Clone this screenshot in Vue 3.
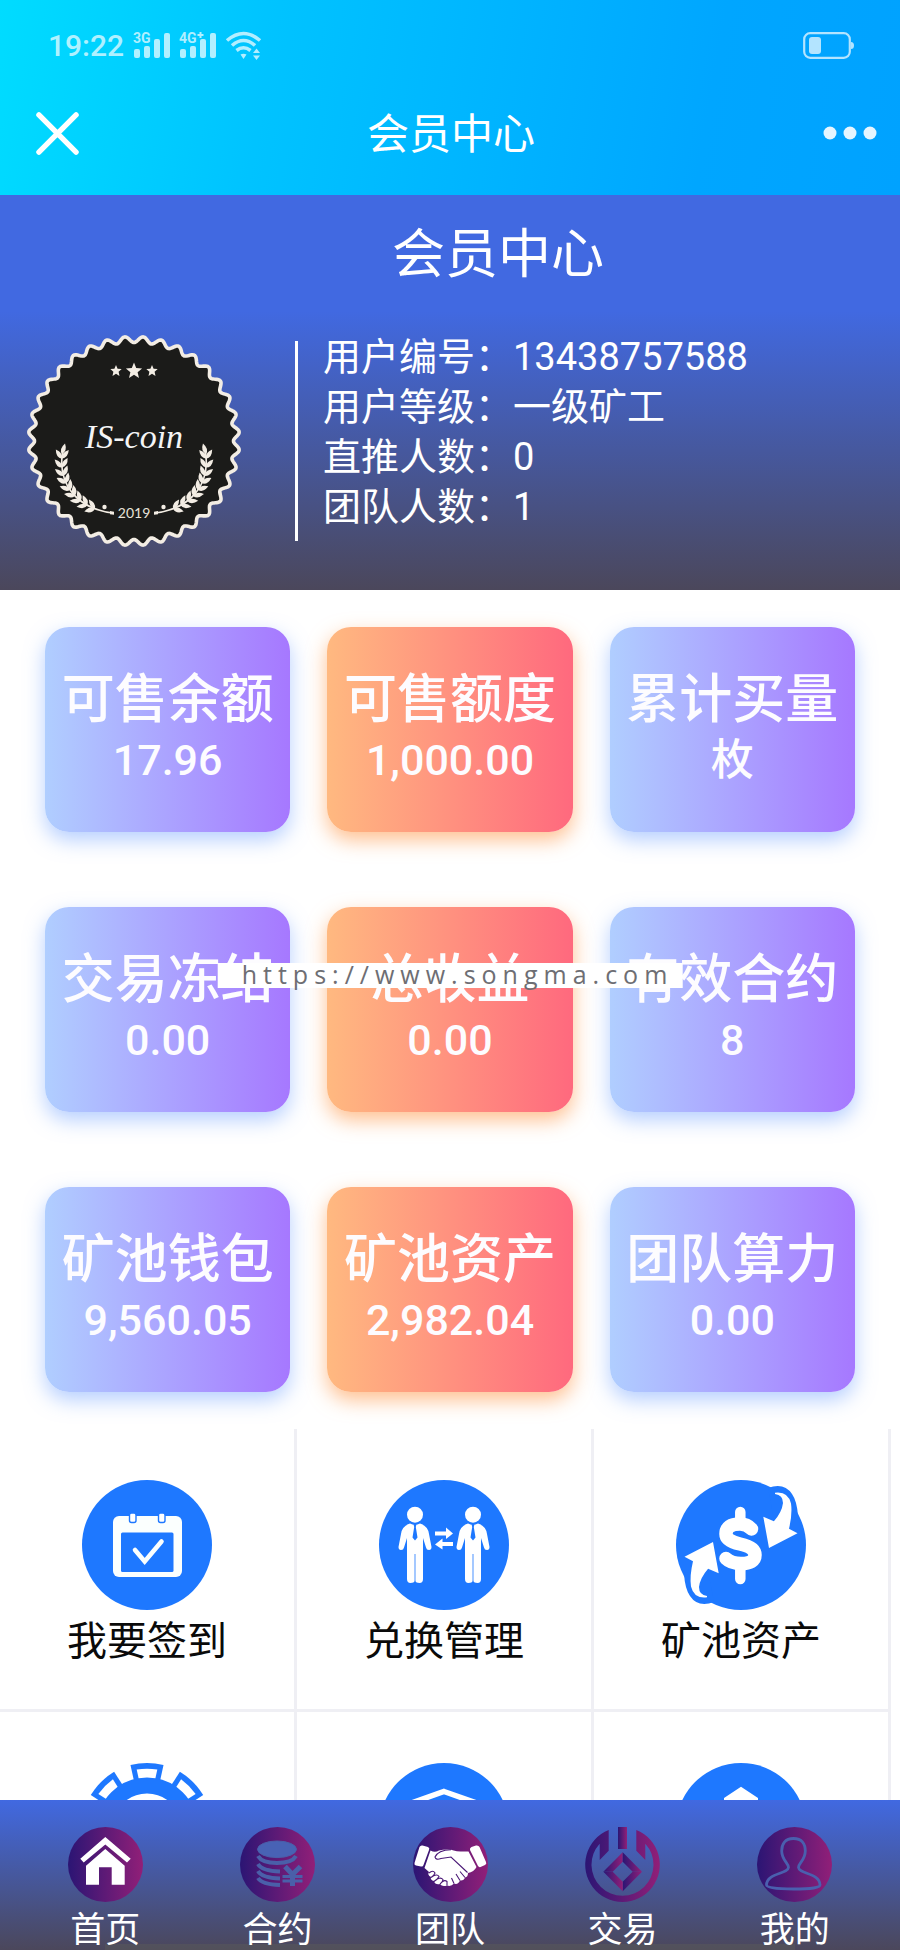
<template>
  <div class="app-shell">
    <svg class="defs" width="0" height="0" aria-hidden="true">
      <defs>
        <linearGradient id="tab-gradient" x1="0" y1="0" x2="1" y2="0">
          <stop offset="0" stop-color="#2b1574" />
          <stop offset="1" stop-color="#911f78" />
        </linearGradient>
      </defs>
    </svg>

    <header class="top-bar">
      <div class="status-row">
        <div class="status-left">
          <span class="clock">19:22</span>
          <svg class="signals" width="130" height="30" viewBox="0 0 130 30" aria-hidden="true">
            <g fill="currentColor">
              <text class="net" x="0" y="12">3G</text>
              <rect x="1" y="18" width="6" height="9" rx="2" />
              <rect x="11" y="15" width="6" height="12" rx="2" />
              <rect x="21" y="8" width="6" height="19" rx="2" />
              <rect x="31" y="2" width="6" height="25" rx="2" />
              <text class="net" x="46" y="12">4G</text>
              <path d="M66.500 1h2v2h2v2h-2v2h-2v-2h-2v-2h2z" />
              <rect x="47" y="18" width="6" height="9" rx="2" />
              <rect x="57" y="15" width="6" height="12" rx="2" />
              <rect x="67" y="8" width="6" height="19" rx="2" />
              <rect x="77" y="2" width="6" height="25" rx="2" />
              <path d="M107.500 23.500q3-1.500 6 0l-3 4.500z" />
              <path d="M120 22l3.500-4.500 3.500 4.500z" />
              <path d="M120 24.500l3.500 4.500 3.500-4.500z" />
            </g>
            <g fill="none" stroke="currentColor" stroke-width="3.600">
              <path d="M94 9.500q16.500-14 33 0" />
              <path d="M99 14.500q11.500-10 23 0" />
              <path d="M103.500 19.500q7-5.500 14 0" />
            </g>
          </svg>
        </div>
        <svg class="battery" width="52" height="28" viewBox="0 0 52 28" aria-hidden="true">
          <rect x="1.200" y="1.200" width="45.600" height="24.600" rx="6" fill="none" stroke="currentColor" stroke-width="2.200" />
          <rect x="6" y="5" width="12" height="17" rx="3" fill="currentColor" />
          <path d="M48 10q3 0 3 3.500t-3 3.500z" fill="currentColor" />
        </svg>
      </div>
      <div class="nav-row">
        <button type="button" class="icon-button" aria-label="关闭">
          <svg width="43" height="43" viewBox="0 0 44 44">
            <path d="M3 3L41 41M41 3L3 41" stroke="#fff" stroke-width="5.500" stroke-linecap="round" />
          </svg>
        </button>
        <div class="nav-title">会员中心</div>
        <button type="button" class="icon-button" aria-label="更多">
          <svg width="54" height="14" viewBox="0 0 54 14" fill="#e5f5ff">
            <circle cx="7" cy="7" r="6.500" />
            <circle cx="27" cy="7" r="6.500" />
            <circle cx="47" cy="7" r="6.500" />
          </svg>
        </button>
      </div>
    </header>

    <main class="content">
      <h1 class="page-title">会员中心</h1>

      <section class="profile">
        <svg class="badge" width="214" height="212" viewBox="-107 -106 214 212" role="img" aria-label="IS-coin 2019">
          <path :d="sealPath" fill="#1b1b19" stroke="#f3ede4" stroke-width="3.600" stroke-linejoin="round" />
          <g fill="#f3ede4">
            <polygon v-for="s in stars" :key="s.x" :points="starPoints(s.x, -70, s.r)" />
          </g>
          <text class="coin-name" x="0" y="7" text-anchor="middle">{{ coin.name }}</text>
          <text class="coin-year" x="0" y="77" text-anchor="middle">{{ coin.year }}</text>
          <g v-for="side in [1, -1]" :key="side" :transform="`scale(${side} 1)`" fill="#f3ede4">
            <path d="M-71 8C-78 45-55 68-21 72" fill="none" stroke="#f3ede4" stroke-width="1.600" />
            <path d="M-24 70l4 .8v3l-4-.5z" />
            <path
              v-for="(leaf, i) in leaves"
              :key="i"
              d="M0 0Q4-4.500 11 0Q4.500 4.500 0 0Z"
              :transform="`translate(${leaf.x} ${leaf.y}) rotate(${leaf.a})`"
            />
            <circle cx="-29.500" cy="66" r="2.200" />
          </g>
        </svg>
        <div class="divider"></div>
        <dl class="info">
          <div v-for="row in info" :key="row.label">
            <dt>{{ row.label }}：</dt>
            <dd>{{ row.value }}</dd>
          </div>
        </dl>
      </section>

      <section class="stats">
        <div v-for="(card, i) in cards" :key="card.label" class="card" :class="{ warm: i % 3 === 1 }">
          <div class="card-label">{{ card.label }}</div>
          <div class="card-value">{{ card.value }}</div>
        </div>
        <span class="site-mark">https://www.songma.com</span>
      </section>

      <section class="menu">
        <a v-for="item in menu" :key="item.icon" href="#" class="menu-item" :aria-label="item.name">
          <svg width="130" height="130" viewBox="0 0 130 130" aria-hidden="true">
            <circle v-if="item.icon !== 'gear'" cx="65" cy="65" r="65" fill="#1e78ff" />
            <template v-if="item.icon === 'calendar'">
              <rect x="31" y="36" width="69" height="61" rx="6" fill="#fbfffe" />
              <rect x="39" y="52.500" width="52.500" height="39.500" rx="1.500" fill="#1e78ff" />
              <g fill="#fff" stroke="#1e78ff" stroke-width="1.400">
                <rect x="47.500" y="33" width="6.500" height="9.500" rx="2" />
                <rect x="76.500" y="33" width="6.500" height="9.500" rx="2" />
              </g>
              <path d="M53 70l9.700 11.500L79.500 61.500" fill="none" stroke="#fbfffe" stroke-width="4.600" stroke-linecap="round" />
            </template>
            <template v-else-if="item.icon === 'exchange'">
              <g v-for="x in [36, 94]" :key="x" :transform="`translate(${x} 0)`" fill="#fff">
                <circle cx="0" cy="34.700" r="8" />
                <path
                  d="M-5 43.500Q-13 46-14 54L-16.500 67Q-16.500 70-14 70T-11 67.500L-8 58V99Q-8 103-4.500 103T0 100.500Q1 103 4.500 103T8 99V58L11 67.500Q11.500 70 14 70T16.500 67L14 54Q13 46 5 43.500Q0 46-5 43.500Z"
                />
                <path d="M-1.500 44h3l-.7 3 1.700 10.500L0 60.500l-2.500-3L-.8 47z" fill="#1e78ff" />
                <path d="M-.4 74h.8v27h-.8z" fill="#1e78ff" />
              </g>
              <path d="M56 51.500h11v-4l7 6-7 5.500v-3.500H56zM74 62H63.500v-3.500l-7.500 6 7.500 5v-3.500H74z" fill="#fff" />
            </template>
            <template v-else-if="item.icon === 'dollar'">
              <g v-for="turn in [0, 180]" :key="turn" :transform="`rotate(${turn} 65 65)`">
                <path d="M92 8Q108 2 116 14Q121 21 122 36L100 50Z" fill="#1e78ff" />
                <path
                  d="M99 12.700Q112 11 115 23.500Q116.500 34 113 48.700L121.500 53.300L93 68L87.300 36.700L97.900 41.300Q106 32 107 23Q107 15 99 14Z"
                  fill="#fff"
                />
              </g>
              <g fill="none" stroke="#fff" stroke-linecap="round">
                <path d="M64.300 32V42M64.300 84V99" stroke-width="10.500" />
                <path
                  d="M75.500 49Q71 44 64 44Q50 44 50 54Q50 61 64 64Q79 67 79 75Q79 83.500 65 83.500Q55 83.500 50 78.500"
                  stroke-width="13.500"
                />
              </g>
            </template>
            <template v-else-if="item.icon === 'gear'">
              <g v-for="n in 8" :key="n" :transform="`rotate(${(n - 1) * 45} 65 65)`">
                <path d="M48.500 2Q65-2 81.500 2L78 18H52Z" fill="#1e78ff" />
                <path d="M54.700 6.500Q65 5 75.300 6.500L73 17H57Z" fill="#fff" />
              </g>
              <circle cx="65" cy="65" r="42.500" fill="none" stroke="#1e78ff" stroke-width="16" />
            </template>
            <path
              v-else-if="item.icon === 'shield'"
              d="M65 28.500L99 40.500V70Q96 88 65 103Q34 88 31 70V40.500Z"
              fill="none"
              stroke="#fff"
              stroke-width="5.500"
            />
            <path v-else d="M65 23.700L82 35V76H98L65 106L32 76H48V35Z" fill="#fff" />
          </svg>
          <span v-if="item.label" class="menu-label">{{ item.label }}</span>
        </a>
      </section>
    </main>

    <nav class="tab-bar">
      <a v-for="tab in tabs" :key="tab.icon" href="#" class="tab">
        <svg width="75" height="75" viewBox="0 0 75 75" aria-hidden="true">
          <circle v-if="tab.icon !== 'trade'" cx="37.500" cy="37.500" r="37.500" fill="url(#tab-gradient)" />
          <g v-if="tab.icon === 'home'" fill="#fff">
            <path d="M37.300 10L62.700 31.700L59 35.500L37.300 17.500L15.700 35.500L12.300 31.700Z" />
            <path d="M37.300 22L56.700 38.700V57.700H43.700V40.300H31V57.700H18V38.700Z" />
          </g>
          <g v-else-if="tab.icon === 'coins'" fill="none" stroke="#4a5fa9">
            <ellipse cx="37" cy="22.300" rx="19.500" ry="8.300" fill="#4862b5" stroke-width="1" />
            <g stroke-width="4">
              <path d="M18 29Q22 36 37 36T56 29" />
              <path d="M18 37Q22 44 40 44.500" />
              <path d="M18 44Q22 51 40 51.500" />
              <path d="M18 51Q22 57.500 40 58" />
            </g>
            <path d="M45 39.500L52.500 47.500L60.500 39.500M52.500 47V59" stroke-width="5" />
            <path d="M42.500 49.500H62.500M42.500 54H62.500" stroke-width="3" />
          </g>
          <template v-else-if="tab.icon === 'team'">
            <g fill="#fff">
              <path d="M9.500 18.500L15 20Q17 21 16 23L10.500 38Q10 40 8 39.500L3 38.500Q1 38 1.500 36L6.500 20Q7.500 18 9.500 18.500Z" />
              <path d="M58.500 20L63 18.500Q65.500 18 66.500 20L73 35Q74 37 72 38L67.500 40Q66 40.500 65 39L57 23Q56.500 21 58.500 20Z" />
              <path
                d="M17.500 23.500Q22 26 26 23.500Q32 22 38 22.700Q44 25 55.500 24.500L63.500 40Q61 45 55 46Q55 50 52 50.500Q51 54 47 53.500Q45 58 41 56.500Q38 60 34 58.500Q29 60 27 57Q22 58 21 54Q17 53 18 50Q14 48 16 45L11.500 41Z"
              />
            </g>
            <g fill="none" stroke="#4a1876" stroke-width="1.100">
              <path d="M38 22.700Q25 23 22 30Q23 33.500 28 31.500L38 30L54.500 45.500" />
              <path d="M16 46Q20 42.500 22 46Q21 49 18 50.500Q24 46 26 49.500Q24 53 21 54.500Q27 49 30 52.500Q30 55 27 57Q31 52 34 54.500V58.500" />
              <path d="M47 53.500L43 47M52 50.500L47 44.500M41 56.500L38.500 51" />
            </g>
          </template>
          <g v-else-if="tab.icon === 'trade'" fill="url(#tab-gradient)">
            <path
              d="M23.700 3A37.300 37.300 0 1 0 51.300 3V23.700L60.300 33V16.700A31 31 0 1 1 14.700 16.700V33L23.700 23.700Z"
            />
            <path d="M33 0h9v22h-9z" />
            <path d="M18.300 44.700L37.700 25.300V34.700L27.700 44.700Z" />
            <path d="M37.700 25.300L57 44.700H47.700L37.700 34.700Z" />
            <path d="M57 44.700L37.700 64.300V54.700L47.700 44.700Z" />
            <path d="M18.300 44.700H27.700L37.700 54.700V64.300Z" />
          </g>
          <path
            v-else
            d="M36.500 11.500C28 11.500 24.700 17 24.700 24C24.700 33 31.500 36 31.500 40.500C31 47 9.500 46 9.500 58Q9.500 62 36.500 62T63 58C63 46 42 47 41.500 40.500C41.500 36 48.300 33 48.300 24C48.300 17 45 11.500 36.500 11.500Z"
            fill="none"
            stroke="#4a5fae"
            stroke-width="2.800"
          />
        </svg>
        <span>{{ tab.label }}</span>
      </a>
    </nav>
  </div>
</template>

<script setup>
import { reactive } from 'vue'

const coin = reactive({ name: 'IS-coin', year: '2019' })

const info = [
  { label: '用户编号', value: '13438757588' },
  { label: '用户等级', value: '一级矿工' },
  { label: '直推人数', value: '0' },
  { label: '团队人数', value: '1' }
]

const cards = [
  { label: '可售余额', value: '17.96' },
  { label: '可售额度', value: '1,000.00' },
  { label: '累计买量', value: '枚' },
  { label: '交易冻结', value: '0.00' },
  { label: '总收益', value: '0.00' },
  { label: '有效合约', value: '8' },
  { label: '矿池钱包', value: '9,560.05' },
  { label: '矿池资产', value: '2,982.04' },
  { label: '团队算力', value: '0.00' }
]

const menu = [
  { icon: 'calendar', name: '我要签到', label: '我要签到' },
  { icon: 'exchange', name: '兑换管理', label: '兑换管理' },
  { icon: 'dollar', name: '矿池资产', label: '矿池资产' },
  { icon: 'gear', name: '设置' },
  { icon: 'shield', name: '安全' },
  { icon: 'download', name: '更多' }
]

const tabs = [
  { icon: 'home', label: '首页' },
  { icon: 'coins', label: '合约' },
  { icon: 'team', label: '团队' },
  { icon: 'trade', label: '交易' },
  { icon: 'mine', label: '我的' }
]

// 徽章锯齿边，36 个齿
const sealPath = (() => {
  const points = []
  for (let i = 0; i < 720; i++) {
    const t = (i / 720) * Math.PI * 2
    const r = 101.5 - 3 * Math.cos(36 * t)
    points.push(`${(r * 1.01 * Math.sin(t)).toFixed(2)} ${(-r * Math.cos(t)).toFixed(2)}`)
  }
  return `M${points.join('L')}Z`
})()

const stars = [
  { x: -18, r: 6 },
  { x: 0, r: 8.5 },
  { x: 18, r: 6 }
]

function starPoints(cx, cy, r) {
  return Array.from({ length: 10 }, (_, i) => {
    const a = (i * Math.PI) / 5
    const d = i % 2 ? r * 0.45 : r
    return `${(cx + d * Math.sin(a)).toFixed(1)},${(cy - d * Math.cos(a)).toFixed(1)}`
  }).join(' ')
}

// 沿麦穗主茎两侧排叶片
const leaves = (() => {
  const p = [[-71, 8], [-78, 45], [-55, 68], [-21, 72]]
  const list = [{ x: -72, y: 13, a: -74 }]
  for (let i = 1; i <= 9; i++) {
    const t = i * 0.09
    const u = 1 - t
    const at = k => u * u * u * p[0][k] + 3 * u * u * t * p[1][k] + 3 * u * t * t * p[2][k] + t * t * t * p[3][k]
    const slope = k => u * u * (p[1][k] - p[0][k]) + 2 * u * t * (p[2][k] - p[1][k]) + t * t * (p[3][k] - p[2][k])
    const back = (Math.atan2(-slope(1), -slope(0)) * 180) / Math.PI
    list.push({ x: at(0), y: at(1), a: back - 36 }, { x: at(0), y: at(1), a: back + 36 })
  }
  return list
})()
</script>

<style>
body {
  margin: 0;
  background: #ffffff;
}

.badge .coin-name {
  fill: #f5f5f5;
  font-family: 'Liberation Serif', serif;
  font-size: 34px;
  font-style: italic;
}

.badge .coin-year {
  fill: #e8e3da;
  font-family: Lato, sans-serif;
  font-size: 14px;
}
</style>

<style scoped>
.app-shell {
  display: flex;
  flex-direction: column;
  height: 100vh;
  font-family: Roboto, 'Noto Sans CJK SC', sans-serif;
  color: #ffffff;
}

.defs {
  position: absolute;
}

.top-bar {
  flex: none;
  padding: 31px 0 20px;
  background: linear-gradient(100deg, #00dcff 0%, #00c3ff 30%, #00a6ff 78%, #00a2ff 100%);
}

.status-row {
  display: flex;
  align-items: center;
  justify-content: space-between;
  height: 30px;
  padding: 0 45px 0 48px;
  color: rgba(255, 255, 255, 0.7);
}

.status-left {
  display: flex;
  align-items: center;
  gap: 9px;
}

.clock {
  font-size: 30px;
  font-weight: 500;
  line-height: 30px;
}

.net {
  font-size: 14px;
  font-weight: 700;
}

.nav-row {
  display: flex;
  align-items: center;
  justify-content: space-between;
  height: 84px;
  margin-top: 30px;
  padding: 0 23px 0 36px;
}

.icon-button {
  display: flex;
  flex: none;
  padding: 0;
  border: none;
  background: none;
  cursor: pointer;
}

.nav-title {
  padding-top: 4px;
  font-size: 42px;
  line-height: 60px;
}

.content {
  flex: 1;
  min-height: 0;
  overflow-y: auto;
  scrollbar-width: none;
}

.page-title {
  margin: 0;
  padding: 22px 0 18px 96px;
  background: #4169e1;
  font-size: 53px;
  font-weight: 400;
  line-height: 76px;
  text-align: center;
}

.profile {
  display: flex;
  align-items: center;
  padding: 21px 27px 40px;
  background: linear-gradient(#4169e1, #4b475b);
}

.badge {
  flex: none;
}

.divider {
  flex: none;
  width: 3px;
  height: 200px;
  margin: 0 25px 0 54px;
  background: #ffffff;
}

.info {
  margin: 0 0 18px;
  font-size: 38px;
  line-height: 50px;
}

.info div {
  display: flex;
}

.info dd {
  margin: 0;
}

.stats {
  position: relative;
  display: grid;
  grid-template-columns: repeat(3, minmax(0, 1fr));
  gap: 75px 37px;
  padding: 37px 45px;
}

.card {
  box-sizing: border-box;
  min-height: 205px;
  padding: 36px 0 40px;
  border-radius: 24px;
  background: linear-gradient(90deg, #b0ceff, #a678ff);
  box-shadow: 0 8px 20px rgba(110, 160, 255, 0.5);
  color: #fdfcff;
  font-weight: 500;
  text-align: center;
  white-space: nowrap;
}

.card.warm {
  background: linear-gradient(90deg, #ffb980, #ff697e);
  box-shadow: 0 8px 20px rgba(255, 150, 70, 0.6);
}

.card-label {
  font-size: 53px;
  line-height: 74px;
}

.card-value {
  font-size: 43px;
  line-height: 46px;
}

.site-mark {
  position: absolute;
  top: 373px;
  left: 50%;
  padding: 0 9px 3px 24px;
  background: #ffffff;
  color: #6e6e73;
  font-family: 'Open Sans', sans-serif;
  font-size: 25px;
  letter-spacing: 6px;
  line-height: 22px;
  transform: translateX(-50%);
}

.menu {
  display: grid;
  grid-template-columns: repeat(3, minmax(0, 1fr));
  margin-right: 9px;
}

.menu-item {
  display: flex;
  flex-direction: column;
  align-items: center;
  padding: 51px 0 35px;
  border-right: 3px solid #efeff4;
  border-bottom: 3px solid #efeff4;
  color: #0a0a0a;
  text-decoration: none;
}

.menu-label {
  font-size: 40px;
  line-height: 64px;
}

.tab-bar {
  position: relative;
  display: flex;
  flex: none;
  box-sizing: border-box;
  height: 150px;
  padding: 27px 19px 0;
  background: linear-gradient(#4169e1, #4b475b);
}

.tab-bar::before {
  position: absolute;
  right: 105px;
  bottom: 0;
  left: 105px;
  height: 6px;
  background: rgba(90, 90, 90, 0.5);
  content: '';
}

.tab {
  position: relative;
  display: flex;
  flex: 1;
  flex-direction: column;
  align-items: center;
  gap: 10px;
  color: #ffffff;
  font-size: 35px;
  line-height: 38px;
  text-decoration: none;
}

.tab svg {
  flex: none;
}
</style>
